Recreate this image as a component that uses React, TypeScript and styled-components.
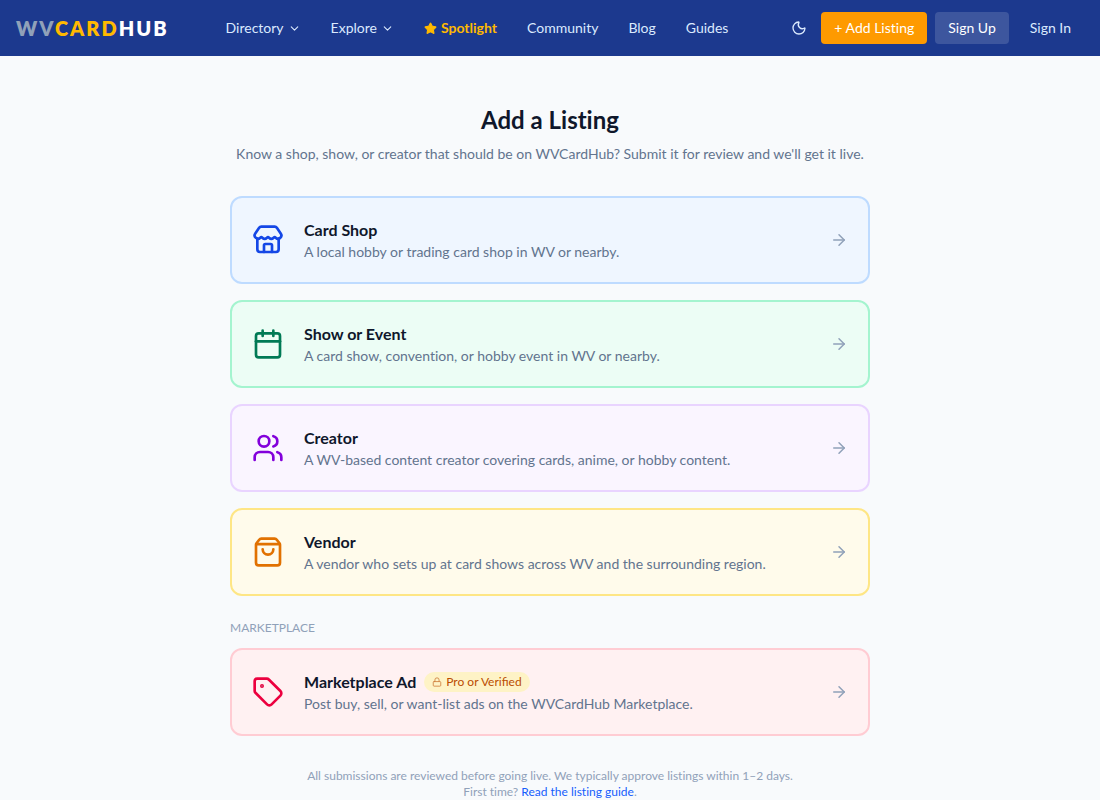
import React from "react";
import styled, { createGlobalStyle } from "styled-components";
import {
  ArrowRight,
  Calendar,
  ChevronDown,
  Lock,
  Moon,
  ShoppingBag,
  Star,
  Store,
  Tag,
  Users,
  type LucideIcon,
} from "lucide-react";

const GlobalStyle = createGlobalStyle`
  *, *::before, *::after { box-sizing: border-box; }
  body {
    margin: 0;
    background: #f8fafc;
    color: #0f172b;
    font-family: Lato, "Liberation Sans", sans-serif;
    font-size: 14px;
    line-height: 20px;
    font-variant-ligatures: none;
  }
  a { color: inherit; text-decoration: none; }
  button { font: inherit; font-variant-ligatures: none; cursor: pointer; }
  h1, h2, p { margin: 0; }
  svg { flex-shrink: 0; }
`;

const Header = styled.header`
  display: flex;
  align-items: center;
  justify-content: space-between;
  height: 56px;
  padding: 0 16px;
  background: #1c398e;
  color: #dbeafe;
`;

const Logo = styled.a`
  color: #fff;
  font-size: 20px;
  line-height: 28px;
  font-weight: 800;
  letter-spacing: 2px;
`;

const LogoPart = styled.span<{ $color: string }>`
  color: ${(p) => p.$color};
`;

const Nav = styled.nav`
  display: flex;
  align-items: center;
  gap: 6px;
`;

const NavLink = styled.a<{ $highlight?: boolean }>`
  display: flex;
  align-items: center;
  gap: 4px;
  padding: 6px 12px;
  color: ${(p) => (p.$highlight ? "#ffb900" : "inherit")};
  font-weight: ${(p) => (p.$highlight ? 700 : 400)};
`;

const NavMenuButton = styled.button`
  display: flex;
  align-items: center;
  gap: 4px;
  padding: 6px 12px;
  border: 0;
  background: none;
  color: inherit;
`;

const Actions = styled.div`
  display: flex;
  align-items: center;
  gap: 8px;
`;

const IconButton = styled.button`
  display: flex;
  padding: 6px;
  border: 0;
  background: none;
  color: inherit;
`;

const ActionLink = styled.a<{ $background?: string; $color?: string }>`
  padding: 6px 13px;
  border-radius: 4px;
  background: ${(p) => p.$background ?? "transparent"};
  color: ${(p) => p.$color ?? "inherit"};
`;

const Main = styled.main`
  max-width: 672px;
  margin: 0 auto;
  padding: 48px 16px 0;
`;

const Intro = styled.div`
  display: flex;
  flex-direction: column;
  gap: 8px;
  margin-bottom: 32px;
  text-align: center;
`;

const Title = styled.h1`
  font-size: 24px;
  line-height: 32px;
  font-weight: 700;
`;

const Muted = styled.p`
  color: #62748e;
`;

const CardList = styled.div`
  display: flex;
  flex-direction: column;
  gap: 16px;
`;

const Card = styled.a<{ $background: string; $border: string }>`
  display: flex;
  align-items: center;
  gap: 20px;
  padding: 20px;
  border: 2px solid ${(p) => p.$border};
  border-radius: 12px;
  background: ${(p) => p.$background};
`;

const CardText = styled.div`
  flex: 1;
  min-width: 0;
`;

const CardHeading = styled.div`
  display: flex;
  align-items: center;
  gap: 8px;
`;

const CardTitle = styled.h2`
  font-size: 16px;
  line-height: 24px;
  font-weight: 700;
`;

const Badge = styled.span`
  display: flex;
  align-items: center;
  gap: 4px;
  padding: 2px 8px;
  border-radius: 10px;
  background: #fef3c6;
  color: #bb4d00;
  font-size: 12px;
  line-height: 16px;
  font-variant-ligatures: normal;
`;

const SectionLabel = styled.h2`
  margin: 24px 0 12px;
  color: #90a1b9;
  font-size: 12px;
  line-height: 16px;
  font-weight: 400;
  text-transform: uppercase;
`;

const Footnote = styled.p`
  margin-top: 32px;
  color: #90a1b9;
  font-size: 12px;
  line-height: 16px;
  text-align: center;
`;

const GuideLink = styled.a`
  color: #155dfc;
`;

type Listing = {
  title: string;
  description: string;
  icon: LucideIcon;
  color: string;
  background: string;
  border: string;
  badge?: string;
};

const listings: Listing[] = [
  {
    title: "Card Shop",
    description: "A local hobby or trading card shop in WV or nearby.",
    icon: Store,
    color: "#1447e6",
    background: "#eff6ff",
    border: "#bedbff",
  },
  {
    title: "Show or Event",
    description: "A card show, convention, or hobby event in WV or nearby.",
    icon: Calendar,
    color: "#007a55",
    background: "#ecfdf5",
    border: "#a4f4cf",
  },
  {
    title: "Creator",
    description: "A WV-based content creator covering cards, anime, or hobby content.",
    icon: Users,
    color: "#8200db",
    background: "#faf5ff",
    border: "#e9d4ff",
  },
  {
    title: "Vendor",
    description: "A vendor who sets up at card shows across WV and the surrounding region.",
    icon: ShoppingBag,
    color: "#e17100",
    background: "#fffbeb",
    border: "#fee685",
  },
];

const marketplaceAd: Listing = {
  title: "Marketplace Ad",
  description: "Post buy, sell, or want-list ads on the WVCardHub Marketplace.",
  icon: Tag,
  color: "#ec003f",
  background: "#fff1f2",
  border: "#ffccd3",
  badge: "Pro or Verified",
};

function ListingCard({ listing }: { listing: Listing }) {
  const Icon = listing.icon;
  return (
    <Card href="#" $background={listing.background} $border={listing.border}>
      <Icon size={32} color={listing.color} />
      <CardText>
        <CardHeading>
          <CardTitle>{listing.title}</CardTitle>
          {listing.badge && (
            <Badge>
              <Lock size={10} opacity={0.7} />
              {listing.badge}
            </Badge>
          )}
        </CardHeading>
        <Muted>{listing.description}</Muted>
      </CardText>
      <ArrowRight size={18} color="#90a1b9" />
    </Card>
  );
}

export default function App() {
  return (
    <>
      <GlobalStyle />
      <Header>
        <Logo href="#">
          <LogoPart $color="#90a1b9">WV</LogoPart>
          <LogoPart $color="#ffb900">CARD</LogoPart>HUB
        </Logo>
        <Nav>
          <NavMenuButton type="button">
            Directory
            <ChevronDown size={13} />
          </NavMenuButton>
          <NavMenuButton type="button">
            Explore
            <ChevronDown size={13} />
          </NavMenuButton>
          <NavLink href="#" $highlight>
            <Star size={13} fill="currentColor" />
            Spotlight
          </NavLink>
          <NavLink href="#">Community</NavLink>
          <NavLink href="#">Blog</NavLink>
          <NavLink href="#">Guides</NavLink>
        </Nav>
        <Actions>
          <IconButton type="button" aria-label="Switch to dark mode">
            <Moon size={16} />
          </IconButton>
          <ActionLink href="#" $background="#fe9a00" $color="#fff">
            + Add Listing
          </ActionLink>
          <ActionLink href="#" $background="rgba(255, 255, 255, 0.15)" $color="#fff">
            Sign Up
          </ActionLink>
          <ActionLink href="#">Sign In</ActionLink>
        </Actions>
      </Header>
      <Main>
        <Intro>
          <Title>Add a Listing</Title>
          <Muted>
            Know a shop, show, or creator that should be on WVCardHub? Submit it for review and
            we'll get it live.
          </Muted>
        </Intro>
        <CardList>
          {listings.map((listing) => (
            <ListingCard key={listing.title} listing={listing} />
          ))}
        </CardList>
        <SectionLabel>Marketplace</SectionLabel>
        <ListingCard listing={marketplaceAd} />
        <Footnote>
          All submissions are reviewed before going live. We typically approve listings within 1–2
          days.
          <br />
          First time? <GuideLink href="#">Read the listing guide</GuideLink>.
        </Footnote>
      </Main>
    </>
  );
}
